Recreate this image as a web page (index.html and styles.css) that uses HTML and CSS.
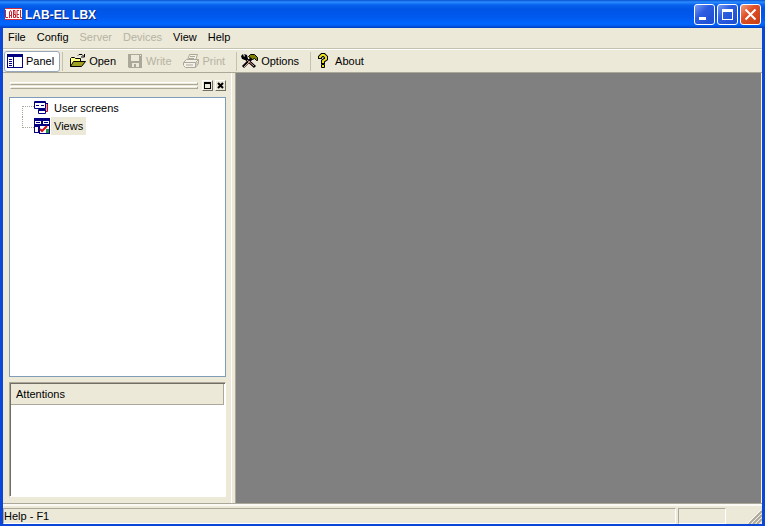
FILE: index.html
```html
<!DOCTYPE html>
<html lang="en">
<head>
<meta charset="utf-8">
<title>LAB-EL LBX</title>
<link rel="stylesheet" href="styles.css">
</head>
<body>
<div class="window">
  <header class="titlebar">
    <svg class="app-icon" width="17" height="16" viewBox="0 0 17 16" aria-hidden="true">
      <path fill="#fff" d="M0 2h17v12H0z"/>
      <path fill="#d03040" d="M0 2h17v1H0zM0 13h17v1H0z"/>
      <path fill="none" stroke="#c8202c" d="M.5 4v7.500H3M4.500 12V6l1-1.500L6.500 6v6M4.500 9.500h2M8.500 4v7.500h2v-3h-2M8 4.500h2v4M14 4.500h-2v7h2M12 8.500h2M15.500 4v7.500H17"/>
    </svg>
    <h1>LAB-EL LBX</h1>
    <div class="caption">
      <button type="button" aria-label="Minimize"><svg width="19" height="19" viewBox="0 0 19 19"><path fill="#fff" d="M4 12h7v3H4z"/></svg></button>
      <button type="button" aria-label="Maximize"><svg width="19" height="19" viewBox="0 0 19 19"><path fill="#fff" fill-rule="evenodd" d="M4 4h11v11H4zM5 7v7h9V7z"/></svg></button>
      <button type="button" class="close" aria-label="Close"><svg width="19" height="19" viewBox="0 0 19 19"><path fill="none" stroke="#fff" stroke-width="2" d="M4.500 4.500l10 10M14.500 4.500l-10 10"/></svg></button>
    </div>
  </header>
  <nav class="menu">
    <button type="button">File</button>
    <button type="button">Config</button>
    <button type="button" disabled>Server</button>
    <button type="button" disabled>Devices</button>
    <button type="button">View</button>
    <button type="button">Help</button>
  </nav>
  <div class="toolbar">
    <button type="button" class="pressed">
      <svg width="16" height="16" viewBox="0 0 16 16"><path fill="#000080" d="M0 1h16v14H0z"/><path fill="#fff" d="M1 4h5v10H1zM7 4h8v10H7z"/><path stroke="#000080" d="M2 6.500h3M2 8.500h3M2 10.500h3M2 12.500h3"/></svg>
      <span>Panel</span>
    </button>
    <i class="sep"></i>
    <button type="button">
      <svg width="17" height="16" viewBox="0 0 17 16"><path fill="#ffff80" stroke="#000" d="M1.500 13.500v-8l1-1h3l1 1h5v3"/><path fill="#a0a020" stroke="#000" d="M1.500 13.500l3-5h12l-4 5z"/><path fill="none" stroke="#000" d="M9 2.500l1-1h3l2 2M15.500 1v3H12"/></svg>
      <span>Open</span>
    </button>
    <button type="button" disabled>
      <svg width="16" height="16" viewBox="0 0 16 16"><path fill="#aca899" fill-rule="evenodd" d="M1 1h14v14H2l-1-1zM4 2v6h8V2zM5 10v4h2v-3h2v3h3v-4zM13 2v1h1V2z"/></svg>
      <span>Write</span>
    </button>
    <button type="button" disabled>
      <svg width="17" height="16" viewBox="0 0 17 16"><g fill="#f4f2e8" stroke="#aca899"><path d="M4.500 7.500l2-6h8l-2 6z"/><path d="M.5 9.500l3-3h12v4l-3 4H2.500l-2-2z"/><path fill="none" d="M.5 9.500h12l3-3M12.500 9.500v5M3 12h7M7 3.500h5M6 5.500h5M14 9v3"/></g></svg>
      <span>Print</span>
    </button>
    <i class="sep wide"></i>
    <button type="button" class="snug">
      <svg width="17" height="16" viewBox="0 0 17 16"><path fill="none" stroke="#000" stroke-width="3" d="M4 5l10 9M11 5l-9 9"/><path fill="#000" d="M0 3l2-2 1 3 1-1-1-2 3 1 1 4-3 1-3-1z"/><path fill="#808000" stroke="#000" d="M7.500 3.500l2-2h4l3 3v3h-1l-2-2-2 1z"/><path stroke="#e0a090" d="M6 7l7 6M9 8l-6 6"/></svg>
      <span>Options</span>
    </button>
    <i class="sep wide"></i>
    <button type="button">
      <svg width="15" height="16" viewBox="0 0 15 16"><path fill="none" stroke="#000" stroke-width="4" d="M3 6V4l2-2h2l2 2v2L6 8v3"/><path fill="none" stroke="#e8e020" stroke-width="2" d="M3 5V4l2-2h2l2 2v2L6 8v2"/><path fill="#e8e020" stroke="#000" d="M4.500 11.500h3v3h-3z"/></svg>
      <span>About</span>
    </button>
  </div>
  <main class="work">
    <aside class="panel">
      <div class="grip">
        <div class="rails"><i></i><i></i></div>
        <button type="button" aria-label="Float"><svg width="9" height="9" viewBox="0 0 9 9"><path fill="#000" fill-rule="evenodd" d="M1 1h7v7H1zM2 3v4h5V3z"/></svg></button>
        <button type="button" aria-label="Close panel"><svg width="9" height="9" viewBox="0 0 9 9"><path stroke="#000" stroke-width="2" d="M2 2l5 5M7 2l-5 5"/></svg></button>
      </div>
      <ul class="tree">
        <li>
          <svg width="16" height="16" viewBox="0 0 16 16"><path fill="#f0a0b0" stroke="#b01030" d="M6.500 3.500h7v8h-7z"/><path fill="#fff" stroke="#000080" d="M.5 1.500h11v7H.5zM4.500 9.500h7v4h-7z"/><path fill="none" stroke="#000080" d="M0 2.500h12M2 5.500h3M7 5.500h3M4 10.500h8M12 3.500h2"/></svg>
          <span>User screens</span>
        </li>
        <li>
          <svg width="16" height="16" viewBox="0 0 16 16"><path fill="#000080" d="M0 0h16v16H5v-1H0z"/><path fill="#fff" d="M1 3h6v3H1zM9 3h6v3H9zM1 9h3v5H1zM6 8h9v7H6z"/><path stroke="#000080" d="M2 4.500h4M10 4.500h4"/><path fill="none" stroke="#d01020" stroke-width="2" d="M6 11l2 2 5-5"/><path fill="#209040" d="M12 11h3v4h-3z"/></svg>
          <span class="selected">Views</span>
        </li>
      </ul>
      <section class="attentions"><h2>Attentions</h2></section>
    </aside>
    <div class="mdi"></div>
  </main>
  <footer class="status">
    <span class="pane message">Help - F1</span>
    <span class="pane small"></span>
    <span class="last"><svg width="14" height="14" viewBox="0 0 14 14"><path stroke="#fff" d="M0 13L13 0M4 13l9-9M8 13l5-5"/><path stroke="#aca899" stroke-width="2" d="M1 14L14 1M5 14l9-9M9 14l5-5"/></svg></span>
  </footer>
</div>
</body>
</html>
```
FILE: styles.css
```css
* { box-sizing: border-box; }
body { margin: 0; background: #0a46d8; }
body, button { font: 11px/14px "Liberation Sans", Arial, sans-serif; color: #000; }
button { border: 0; padding: 0; background: none; }
svg { display: block; flex: none; }
.window {
  display: flex;
  flex-direction: column;
  min-height: 100vh;
  border: solid #0a46d8;
  border-width: 0 3px 2px;
  background: #ece9d8;
}
.titlebar {
  display: flex;
  align-items: center;
  height: 28px;
  margin: 0 -3px;
  padding: 0 4px 0 5px;
  background: linear-gradient(#0a50d0 0, #2a8cff 2px, #0862ee 5px, #0055e5 9px, #0059ee 17px, #0066ff 24px, #0058e8 26px, #003dc0 28px);
}
h1 {
  flex: 1;
  margin: 2px 0 0 3px;
  font: bold 12px/16px "Liberation Sans", Arial, sans-serif;
  color: #fff;
  text-shadow: 1px 1px #0a2a80;
}
.caption { display: flex; gap: 2px; padding-top: 1px; }
.caption button {
  width: 21px;
  height: 21px;
  border: 1px solid #fff;
  border-radius: 3px;
  background: linear-gradient(135deg, #7a9cf0, #2c5ce0 40%, #1c4cd0);
  overflow: hidden;
}
.caption .close { background: linear-gradient(135deg, #f0a080, #e05028 40%, #c83c10); }
.menu {
  display: flex;
  gap: 11px;
  height: 21px;
  padding: 0 5px 2px;
  border-bottom: 1px solid #c5c2b0;
}
button:disabled { color: #b5b2a2; }
.toolbar {
  display: flex;
  align-items: center;
  height: 24px;
  border-top: 1px solid #fff;
  border-bottom: 1px solid #aca899;
}
.toolbar button { display: flex; align-items: center; gap: 3px; height: 21px; padding: 0 6px 0 5px; }
.toolbar .pressed {
  margin-left: 1px;
  padding: 0 5px 0 2px;
  border: 1px solid #98a8bc;
  border-radius: 3px;
  background: #fff;
}
.toolbar .snug { padding-left: 3px; }
.sep { width: 1px; height: 19px; margin: 0 1px 0 2px; background: #c5c2b0; }
.sep.wide { margin-left: 5px; }
.work { flex: 1; display: grid; grid-template-columns: 233px 1fr; }
.panel {
  display: flex;
  flex-direction: column;
  padding: 6px 9px 6px 6px;
  border-right: 1px solid #aca899;
  box-shadow: inset -3px 0 #ece9d8, inset -4px 0 #fff;
}
.grip { display: flex; align-items: center; gap: 2px; height: 12px; margin-bottom: 6px; padding-left: 1px; }
.rails { flex: 1; display: flex; flex-direction: column; gap: 1px; margin-right: 2px; }
.rails i { height: 3px; border: 1px solid; border-color: #fff #aca899 #aca899 #fff; }
.grip button { width: 11px; height: 11px; border: 1px solid; border-color: #fff #716f64 #716f64 #fff; }
.tree {
  flex: 1;
  margin: 0;
  padding: 1px 0 0 12px;
  border: 1px solid #7f9db9;
  background: #fff;
  list-style: none;
}
.tree li { display: flex; align-items: center; height: 18px; }
.tree li::before { content: ""; align-self: flex-start; width: 11px; height: 10px; border: dotted #aca899; border-width: 0 0 1px 1px; }
.tree li:first-child::before { align-self: flex-end; border-width: 1px 0 0 1px; }
.tree span { margin-left: 1px; padding: 2px 3px; }
.tree .selected { background: #ece9d8; }
.attentions {
  height: 115px;
  margin-top: 5px;
  border: 1px solid;
  border-color: #aca899 #fff #fff #aca899;
  box-shadow: inset 1px 1px #716f64;
  padding: 1px;
  background: #fff;
}
h2 {
  height: 21px;
  margin: 0;
  padding: 3px 5px;
  border: solid #aca899;
  border-width: 0 1px 1px 0;
  background: #ece9d8;
  font: inherit;
}
.mdi { background: #808080; border-right: 1px solid #f4f2e8; }
.status { display: flex; gap: 2px; height: 21px; padding-top: 4px; border-top: 1px solid #aca899; box-shadow: inset 0 2px #fbfaf4; }
.pane { border: 1px solid; border-color: #aca899 #fff #fff #aca899; }
.message { flex: 1; line-height: 15px; }
.small { width: 48px; }
.last { display: flex; justify-content: flex-end; align-items: flex-end; width: 34px; }
```
